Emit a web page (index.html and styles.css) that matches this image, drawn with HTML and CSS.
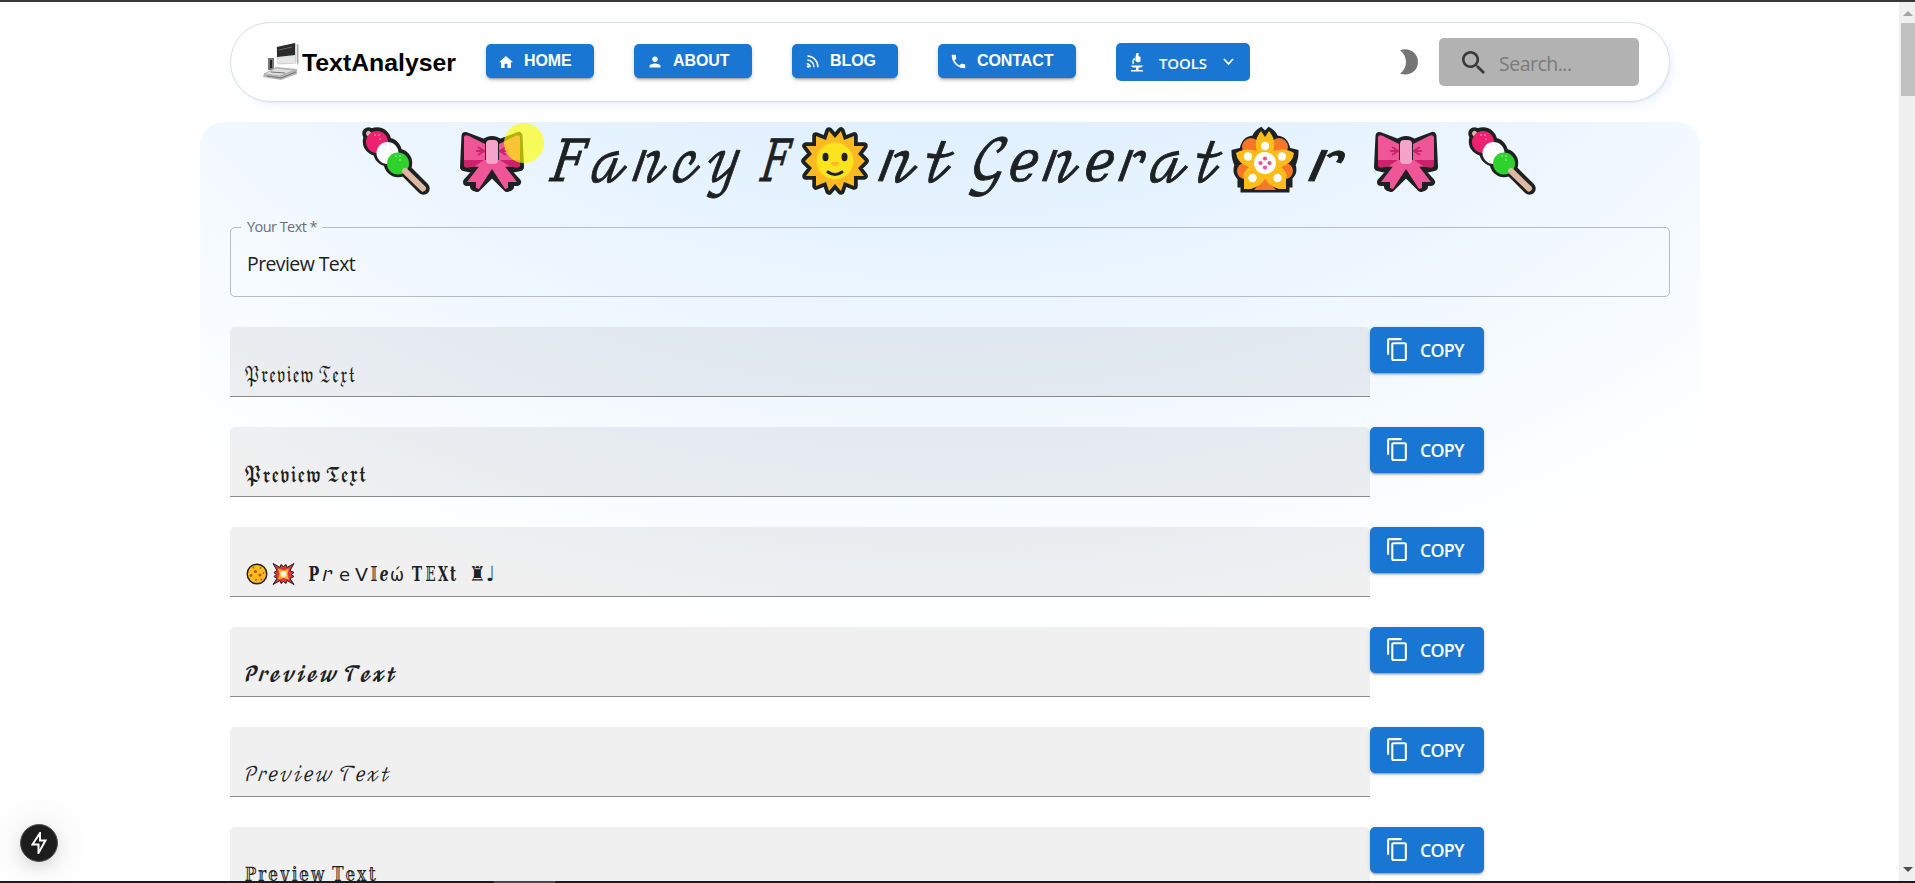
FILE: index.html
```html
<!DOCTYPE html>
<html lang="en">
<head>
<meta charset="utf-8">
<title>Fancy Font Generator</title>
<link rel="stylesheet" href="styles.css">
</head>
<body>
<svg class="defs" width="0" height="0" aria-hidden="true">
  <defs>
    <symbol id="copy" viewBox="0 0 24 24"><path fill="#fff" d="M16 1H4c-1.100 0-2 .9-2 2v14h2V3h12V1zm3 4H8c-1.100 0-2 .9-2 2v14c0 1.100.9 2 2 2h11c1.100 0 2-.9 2-2V7c0-1.100-.9-2-2-2zm0 16H8V7h11v14z"/></symbol>
    <symbol id="dango" viewBox="0 0 68 68">
      <g fill="#1d2122" stroke="#1d2122" stroke-width="7.500" stroke-linejoin="round" stroke-linecap="round">
        <path d="M6.500 6.500L61.500 61.500" stroke-width="12.500"/>
        <circle cx="15" cy="14.500" r="10.500"/><circle cx="25.500" cy="25" r="10.500"/><circle cx="36" cy="36" r="10.500"/>
      </g>
      <path d="M6.500 6.500L10 10" stroke="#deb8a0" stroke-width="5" stroke-linecap="round"/>
      <circle cx="15" cy="15" r="11" fill="#ee2070"/>
      <circle cx="25.500" cy="26" r="11" fill="#fff"/>
      <circle cx="36" cy="36.500" r="11" fill="#2fd12c"/>
      <path d="M43 44L61 61.500" stroke="#deb8a0" stroke-width="6" stroke-linecap="round"/>
      <g fill="#fff" opacity=".45"><circle cx="13" cy="8" r=".9"/><circle cx="17" cy="8" r=".9"/><circle cx="18" cy="12" r=".9"/><circle cx="34" cy="29" r=".9"/><circle cx="38" cy="29" r=".9"/><circle cx="38" cy="33" r=".9"/></g>
      <g fill="#ddd"><circle cx="24" cy="18" r=".8"/><circle cx="28" cy="18" r=".8"/><circle cx="29" cy="22" r=".8"/></g>
    </symbol>
    <symbol id="bow" viewBox="0 0 64 62">
      <path d="M5.500 5L24 12Q32 6 40 12L58.500 5L60 36L46 39L57 51H50V56L47 57L32 42L17 57L14 56V51H7L18 39L4 36Z" fill="#1d2122" stroke="#1d2122" stroke-width="8" stroke-linejoin="round"/>
      <path d="M4 6Q5 3 9 5L25 13V29L22 36L4 35Z" fill="#ef5697"/><path d="M60 6Q59 3 55 5L39 13V29L42 36L60 35Z" fill="#ef5697"/>
      <path d="M4 29H24L15 35Q4 39 4 34Z" fill="#cc216c"/><path d="M60 29H40L49 35Q60 39 60 34Z" fill="#cc216c"/>
      <path d="M24 29H40L57 51H48V57L45 58L32 38L19 58L16 57V51H7Z" fill="#ef5697"/>
      <path d="M18 16L24 20L18 24M16 20H24M46 16L40 20L46 24M48 20H40" fill="none" stroke="#cc216c" stroke-width="2"/>
      <rect x="26" y="9" width="12" height="24" rx="4" fill="#f5a3c9"/>
    </symbol>
  </defs>
</svg>
<div class="edge-top"></div>
<div class="window">
  <main class="page">
    <header class="bar">
      <a class="brand">
        <svg width="38" height="42" viewBox="0 0 38 42">
          <path d="M15 6L34 3L34 22L16 23Z" fill="#ddd" stroke="#ccc"/>
          <path d="M15 6L33 2V14L15 16Z" fill="#2b2b2b"/>
          <path d="M17 9L30 6" stroke="#666"/>
          <path d="M16 17L33 15V22H16Z" fill="#e6e6e6"/>
          <path d="M35 4V24L36.500 22V3Z" fill="#aaa"/>
          <rect x="6" y="17" width="6" height="12" fill="#777"/><rect x="8" y="19" width="2" height="8" fill="#222"/>
          <path d="M2 33L14 26L35 28V33L19 39L1 36Z" fill="#b5b5b5"/>
          <path d="M2 33L14 27L33 29L18 35Z" fill="#ddd" stroke="#aaa" stroke-width=".8"/>
          <path d="M5 35L19 37L34 31M9 31L23 32" stroke="#777" fill="none"/>
        </svg><span>TextAnalyser</span>
      </a>
      <nav class="links">
        <a class="nav home"><svg width="14" height="14" viewBox="2 2 20 19"><path d="M10 20v-6h4v6h5v-8h3L12 3 2 12h3v8z"/></svg>HOME</a>
        <a class="nav about"><svg width="14" height="14" viewBox="2 2 20 20"><path d="M12 12c2.210 0 4-1.790 4-4s-1.790-4-4-4-4 1.790-4 4 1.790 4 4 4zm0 2c-2.670 0-8 1.340-8 4v2h16v-2c0-2.660-5.330-4-8-4z"/></svg>ABOUT</a>
        <a class="nav blog"><svg width="13" height="13" viewBox="3 3 18 18"><g fill="none" stroke="#fff" stroke-width="2"><path d="M5 4.500A15 15 0 0 1 19.500 20M5 10A9.500 9.500 0 0 1 14 20"/></g><path d="M4 14a6 6 0 0 1 6 6H8a4 4 0 0 0-4-4z"/><circle cx="6" cy="19" r="1.800"/></svg>BLOG</a>
        <a class="nav contact"><svg width="15" height="15" viewBox="2 2 20 20"><path d="M6.620 10.790c1.440 2.830 3.760 5.140 6.590 6.590l2.200-2.200c.27-.27.67-.36 1.020-.24 1.120.37 2.330.57 3.570.57.55 0 1 .45 1 1V20c0 .55-.45 1-1 1-9.390 0-17-7.610-17-17 0-.55.45-1 1-1h3.500c.55 0 1 .45 1 1 0 1.250.2 2.450.57 3.570.11.35.03.74-.25 1.020l-2.200 2.200z"/></svg>CONTACT</a>
        <a class="nav tools"><svg width="14" height="19" viewBox="0 0 14 19"><path d="M1 17H13V18.500H1ZM6 14H8.500V17H6Z"/><path d="M0.500 12.500H13.500L11 14.500H3Z"/><path d="M6.500 0H8.500V3L10.500 4V8.500L8 9.500L5.500 8V4Z"/><path d="M5 5.500A4 4 0 0 0 3.500 11" fill="none" stroke="#fff" stroke-width="1.500"/></svg><span>TOOLS</span><svg class="caret" width="11" height="8" viewBox="0 0 11 8"><path d="M1 1L5.500 6L10 1" fill="none" stroke="#fff" stroke-width="1.800"/></svg></a>
      </nav>
      <svg class="moon" width="18" height="26" viewBox="0 0 18 26"><path d="M0 1.200C9-2 18 4 18 13S9 28 0 24.500C8 19 8 7 0 1.200Z" fill="#757575"/></svg>
      <label class="search"><svg width="23" height="23" viewBox="3 3 17.500 17.500"><path fill="#3a3a3a" d="M15.500 14h-.79l-.28-.27C15.410 12.590 16 11.110 16 9.500 16 5.910 13.090 3 9.500 3S3 5.910 3 9.500 5.910 16 9.500 16c1.610 0 3.090-.59 4.230-1.570l.27.28v.79l5 4.990L20.490 19l-4.990-5zm-6 0C7.010 14 5 11.990 5 9.500S7.010 5 9.500 5 14 7.010 14 9.500 11.990 14 9.500 14z"/></svg><span>Search...</span></label>
    </header>

    <section class="hero">
      <h1 class="title">
        <svg class="candy" width="68" height="68"><use href="#dango"/></svg>
        <svg class="ribbon" width="64" height="62"><use href="#bow"/></svg>
        <svg class="word w-fancy" width="192" height="74"><text x="0" y="59" textLength="194" lengthAdjust="spacingAndGlyphs">𝐹𝒶𝓃𝒸𝓎</text></svg>
        <svg class="word w-f" width="34" height="74"><text x="0" y="59" textLength="34" lengthAdjust="spacingAndGlyphs">𝐹</text></svg>
        <svg class="sun" width="68" height="68" viewBox="0 0 68 68">
          <path d="M34 11L40 4L43 13L53 9L53 19L63 19L57 27L64 34L57 41L63 49L53 49L53 59L43 55L40 64L34 57L28 64L25 55L15 59L15 49L5 49L11 41L4 34L11 27L5 19L15 19L15 9L25 13L28 4Z" fill="#fcb921" stroke="#1d2122" stroke-width="7.500" stroke-linejoin="round" paint-order="stroke"/>
          <circle cx="34" cy="34" r="18.500" fill="#fbe31f"/><ellipse cx="24.500" cy="30" rx="3" ry="4.200" fill="#1d2122"/><ellipse cx="43.500" cy="30" rx="3" ry="4.200" fill="#1d2122"/>
          <path d="M30 35H38Q37 39 34 39T30 35Z" fill="#fcb921"/><path d="M27 45Q34 50 41 45" stroke="#1d2122" stroke-width="3" fill="none" stroke-linecap="round"/>
        </svg>
        <svg class="word w-nt" width="78" height="74"><text x="0" y="59" textLength="80" lengthAdjust="spacingAndGlyphs">𝓃𝓉</text></svg>
        <svg class="word w-gen" width="254" height="74"><text x="0" y="59" textLength="255" lengthAdjust="spacingAndGlyphs">𝒢𝑒𝓃𝑒𝓇𝒶𝓉</text></svg>
        <svg class="flower" width="68" height="70" viewBox="0 0 68 70">
          <path d="M30 5L34 9L38 5Q43 8 45 13Q55 13 57 25L65 27Q65 34 62 40Q65 48 58 53H59V60H56V65H12V60H9V53Q3 48 6 40Q3 34 3 27L11 25Q13 13 23 13Q25 8 30 5Z" fill="#1d2122" stroke="#1d2122" stroke-width="5"/>
          <g fill="#f77628"><circle cx="20" cy="22" r="9"/><circle cx="48" cy="22" r="9"/><circle cx="14" cy="46" r="8"/><circle cx="54" cy="46" r="8"/><path d="M34 52L45 65H23Z"/></g>
          <path d="M30 6L34 12L38 6Q46 16 42 26Q54 22 63 28Q62 38 50 42Q58 49 55 54V64H48Q38 61 34 54Q30 61 20 64H13V54Q10 49 18 42Q6 38 5 28Q14 22 26 26Q22 16 30 6Z" fill="#fcbd1c"/>
          <circle cx="34" cy="38" r="11" fill="#fff"/><g fill="#fff"><circle cx="34" cy="21" r="4.200"/><circle cx="17" cy="31.500" r="4.200"/><circle cx="51" cy="31.500" r="4.200"/><circle cx="21.500" cy="53" r="4.200"/><circle cx="46.500" cy="53" r="4.200"/></g>
          <g fill="#ef4e97"><circle cx="34" cy="33.500" r="2.100"/><circle cx="34" cy="42.500" r="2.100"/><circle cx="29.500" cy="38" r="2.100"/><circle cx="38.500" cy="38" r="2.100"/></g>
        </svg>
        <svg class="word w-r" width="43" height="74"><text x="0" y="59" textLength="43" lengthAdjust="spacingAndGlyphs">𝓇</text></svg>
        <svg class="ribbon right" width="64" height="62"><use href="#bow"/></svg>
        <svg class="candy right" width="68" height="68"><use href="#dango"/></svg>
      </h1>

      <fieldset class="source"><legend>Your Text *</legend><span>Preview Text</span></fieldset>

      <div class="rows">
        <div class="row"><div class="field"><svg width="300" height="36"><text x="0" y="25" textLength="112" lengthAdjust="spacingAndGlyphs">𝔓𝔯𝔢𝔳𝔦𝔢𝔴 𝔗𝔢𝔵𝔱</text></svg></div><button class="copy"><svg width="25" height="25"><use href="#copy"/></svg>COPY</button></div>
        <div class="row"><div class="field"><svg width="300" height="36"><text x="0" y="25" textLength="123" lengthAdjust="spacingAndGlyphs">𝕻𝖗𝖊𝖛𝖎𝖊𝖜 𝕿𝖊𝖝𝖙</text></svg></div><button class="copy"><svg width="25" height="25"><use href="#copy"/></svg>COPY</button></div>
        <div class="row"><div class="field">
          <svg width="300" height="36">
            <circle cx="13" cy="17" r="9.800" fill="#fcb921" stroke="#1d2122" stroke-width="1.400"/>
            <g fill="#a9601c"><circle cx="11.500" cy="14.500" r="1.600"/><circle cx="16" cy="18" r="1.600"/><circle cx="7" cy="18.500" r="1.400"/><circle cx="9.500" cy="10.500" r=".9"/><circle cx="16.500" cy="11" r=".9"/><circle cx="19.500" cy="16" r=".9"/><circle cx="12" cy="23" r="1"/><circle cx="17.500" cy="22.500" r="1"/></g>
            <path d="M29 6.500L36 10.500L37 7.500L39.500 9.500L42 7.500L43 10.500L50 6.500L46 13.500L50 15.500L47 17.500L50 19.500L46 21.500L50 27.500L43 23.500L42 26.500L39.500 24.500L37 26.500L36 23.500L29 27.500L33 21.500L30 19.500L32 17.500L30 15.500L33 13.500Z" fill="#e5333c" stroke="#1d2122" stroke-width="1"/>
            <path d="M34 11.500L39.500 13.500L45 11.500L43.500 17L45 22.500L39.500 21L34 22.500L35.500 17Z" fill="#fcb52b"/><circle cx="39.500" cy="17" r="3" fill="#fff6d0"/>
            <text x="64" y="24" textLength="12" lengthAdjust="spacingAndGlyphs">𝐏</text><text x="77" y="24" textLength="13" lengthAdjust="spacingAndGlyphs">𝓇</text><text class="sans" x="95" y="24">e</text><text class="sans" x="111" y="24" textLength="13" lengthAdjust="spacingAndGlyphs">ᐯ</text><text x="126" y="24" textLength="8" lengthAdjust="spacingAndGlyphs">𝕀</text><text x="135" y="24" textLength="10" lengthAdjust="spacingAndGlyphs">𝒆</text><text class="sans" x="146" y="24" textLength="14" lengthAdjust="spacingAndGlyphs">ώ</text>
            <text x="167" y="24" textLength="12" lengthAdjust="spacingAndGlyphs">𝐓</text><text x="181" y="24" textLength="11" lengthAdjust="spacingAndGlyphs">𝔼</text><text x="193" y="24" textLength="20" lengthAdjust="spacingAndGlyphs">𝐗𝐭</text>
            <text class="chess" x="225" y="24" textLength="17" lengthAdjust="spacingAndGlyphs">♜</text><text class="chess" x="242" y="24" textLength="9" lengthAdjust="spacingAndGlyphs">♩</text>
          </svg></div><button class="copy"><svg width="25" height="25"><use href="#copy"/></svg>COPY</button></div>
        <div class="row"><div class="field script"><svg width="300" height="36"><text x="-1" y="24" textLength="153" lengthAdjust="spacingAndGlyphs">𝓟𝓻𝓮𝓿𝓲𝓮𝔀 𝓣𝓮𝔁𝓽</text></svg></div><button class="copy"><svg width="25" height="25"><use href="#copy"/></svg>COPY</button></div>
        <div class="row"><div class="field script"><svg width="300" height="36"><text x="-1" y="24" textLength="147" lengthAdjust="spacingAndGlyphs">𝒫𝓇𝑒𝓋𝒾𝑒𝓌 𝒯𝑒𝓍𝓉</text></svg></div><button class="copy"><svg width="25" height="25"><use href="#copy"/></svg>COPY</button></div>
        <div class="row"><div class="field"><svg width="300" height="36"><text x="0" y="24" textLength="133" lengthAdjust="spacingAndGlyphs">ℙ𝕣𝕖𝕧𝕚𝕖𝕨 𝕋𝕖𝕩𝕥</text></svg></div><button class="copy"><svg width="25" height="25"><use href="#copy"/></svg>COPY</button></div>
      </div>
    </section>
  </main>
  <aside class="scrollbar"><i class="up"></i><div class="thumb"></div><i class="down"></i></aside>
</div>
<div class="edge-bottom"><i></i></div>
<div class="pointer"></div>
<div class="devtool"><svg width="16" height="22" viewBox="0 0 16 22"><path d="M9 1L1.500 12.500H7.500V21L14.500 8.500H9Z" fill="none" stroke="#fff" stroke-width="2"/></svg></div>
</body>
</html>
```
FILE: styles.css
```css
* { box-sizing: border-box; }
body { margin: 0; height: 883px; overflow: hidden; display: flex; flex-direction: column; background: #fff; color: #1d2122; font-family: "Open Sans", sans-serif; }
.defs { position: absolute; }
svg { display: block; flex: none; }
.edge-top { height: 2px; background: #38373a; flex: none; }
.window { height: 879px; display: flex; overflow: hidden; flex: none; }
.page { flex: 1; padding: 20px 199px 0 200px; overflow: hidden; }

.bar { height: 80px; margin: 0 30px; border: 1px solid #dcdfe1; border-radius: 40px; display: flex; align-items: center; padding: 0 30px 0 31px; box-shadow: 0 0 1px rgba(85,166,246,.1), 1px 1.5px 2px -1px rgba(85,166,246,.15), 4px 4px 12px -2.5px rgba(85,166,246,.15); }
.brand { display: flex; align-items: center; width: 224px; color: #000; font: bold 24.8px "Liberation Sans", Arial, sans-serif; }
.brand svg { margin-right: 2px; }
.brand span { padding-top: 1px; }
.links { display: flex; gap: 40px; align-items: center; margin-top: -1px; }
.nav { height: 34px; display: flex; align-items: center; margin-bottom: 1px; border-radius: 5px; background: #1976d2; color: #fff; fill: #fff; font: bold 16px/31px "Liberation Sans", Arial, sans-serif; letter-spacing: -.1px; padding: 0 0 2px 13px; box-shadow: 0 3px 2px -2px rgba(0,0,0,.3), 0 2px 4px rgba(0,0,0,.2); }
.nav svg { margin: 3px 11px 0 0; }
.home { width: 108px; }
.about { width: 118px; }
.about svg { margin-left: 1px; }
.blog { width: 106px; }
.blog svg { margin-left: 1px; }
.contact { width: 138px; }
.tools { width: 134px; height: 38px; box-shadow: none; margin: 1px 0 0; padding: 2px 0 0 14px; font: 600 15px "Open Sans", sans-serif; letter-spacing: -.1px; }
.tools svg { margin: -2px 15px 0 0; }
.tools .caret { margin: -3px 0 0 16px; }
.moon { margin-left: auto; }
.search { width: 200px; height: 48px; margin-left: 21px; border-radius: 5px; background: #b2b2b2; display: flex; align-items: center; gap: 14px; padding-left: 23px; color: #7b7b7b; font-size: 19.500px; letter-spacing: -.5px; }
.search span { padding-top: 3px; }

.hero { margin-top: 20px; height: 1750px; padding: 0 30px; border-radius: 24px 24px 0 0; background: radial-gradient(ellipse 80% 50% at 50% -20%, hsl(210,100%,90%), transparent); }
.title { margin: 0; height: 90px; display: flex; padding-left: 132px; font-size: 58px; font-weight: 400; }
.word { overflow: visible; }
.word text, .field text { fill: #1d2122; font-family: "DejaVu Math TeX Gyre", "DejaVu Serif", "DejaVu Sans", serif; }
.word text { stroke: #1d2122; stroke-width: .9px; transform: skewX(-9deg); transform-origin: 0 59px; }
.candy { margin: 5px 0 0; }
.ribbon { margin: 9px 0 0 30px; }
.w-fancy { margin-left: 21px; }
.w-f { margin-left: 19px; }
.sun { margin: 5px 0 0 11px; }
.w-nt { margin-left: 5px; }
.w-gen { margin-left: 15px; }
.flower { margin: 3px 0 0 10px; }
.w-r { margin-left: 4px; }
.ribbon.right { margin-left: 28px; }
.candy.right { margin-left: 30px; }

.source { margin: 5px 0 0; height: 80px; padding: 0 16px; border: 1px solid #b5bcc3; border-radius: 5px; font-size: 19.500px; letter-spacing: -.6px; }
.source legend { margin-left: -6px; padding: 0 5px 0 6px; color: #667079; font-size: 14.500px; letter-spacing: -.55px; line-height: 20px; }
.source span { display: block; padding-top: 14px; line-height: 26px; }

.rows { margin-top: 30px; display: grid; gap: 30px; }
.row { display: flex; height: 70px; align-items: flex-start; }
.field { width: 1140px; height: 70px; border-radius: 5px 5px 0 0; border-bottom: 1px solid #888a8c; background: rgba(0,0,0,.06); padding: 30px 0 0 14px; font-size: 20px; }
.field svg { overflow: visible; }
.field.script text { transform: skewX(-8deg); transform-origin: 0 24px; }
.field .sans { font-family: "DejaVu Sans", sans-serif; font-size: 18px; }
.field .chess { font-family: "DejaVu Sans", sans-serif; font-size: 21px; }
.copy { width: 114px; height: 46px; border: 0; border-radius: 5px; background: #1976d2; color: #fff; display: flex; align-items: center; padding: 0 0 0 15px; gap: 10px; font: 600 17.800px "Open Sans", sans-serif; letter-spacing: -.7px; box-shadow: 0 3px 1px -2px rgba(0,0,0,.2), 0 2px 2px rgba(0,0,0,.14), 0 1px 5px rgba(0,0,0,.12); }
.copy svg { margin-top: -2px; }

.scrollbar { width: 16px; background: #f0f0f0; display: flex; flex-direction: column; align-items: center; }
.up { margin: 9px 0 0 2px; border: 5px solid transparent; border-top: 0; border-bottom-color: #a3a3a3; }
.thumb { width: 14px; height: 73px; margin: 7px 0 0 2px; background: #c1c1c1; }
.down { margin: auto 0 9px 2px; border: 5px solid transparent; border-bottom: 0; border-top-color: #505050; }
.edge-bottom { height: 2px; background: #1a1c20; flex: none; }
.edge-bottom i { display: block; width: 61px; height: 2px; margin-left: 494px; background: #48494b; }
.pointer { position: absolute; left: 504px; top: 123px; width: 40px; height: 40px; border-radius: 50%; background: rgba(255,255,0,.65); }
.devtool { position: absolute; left: 20px; top: 824px; width: 38px; height: 38px; border-radius: 50%; background: #1d1d1d; border: 1px solid #555; display: flex; align-items: center; justify-content: center; box-shadow: 0 6px 16px rgba(0,0,0,.12), 0 0 48px rgba(0,0,0,.12); }
```
